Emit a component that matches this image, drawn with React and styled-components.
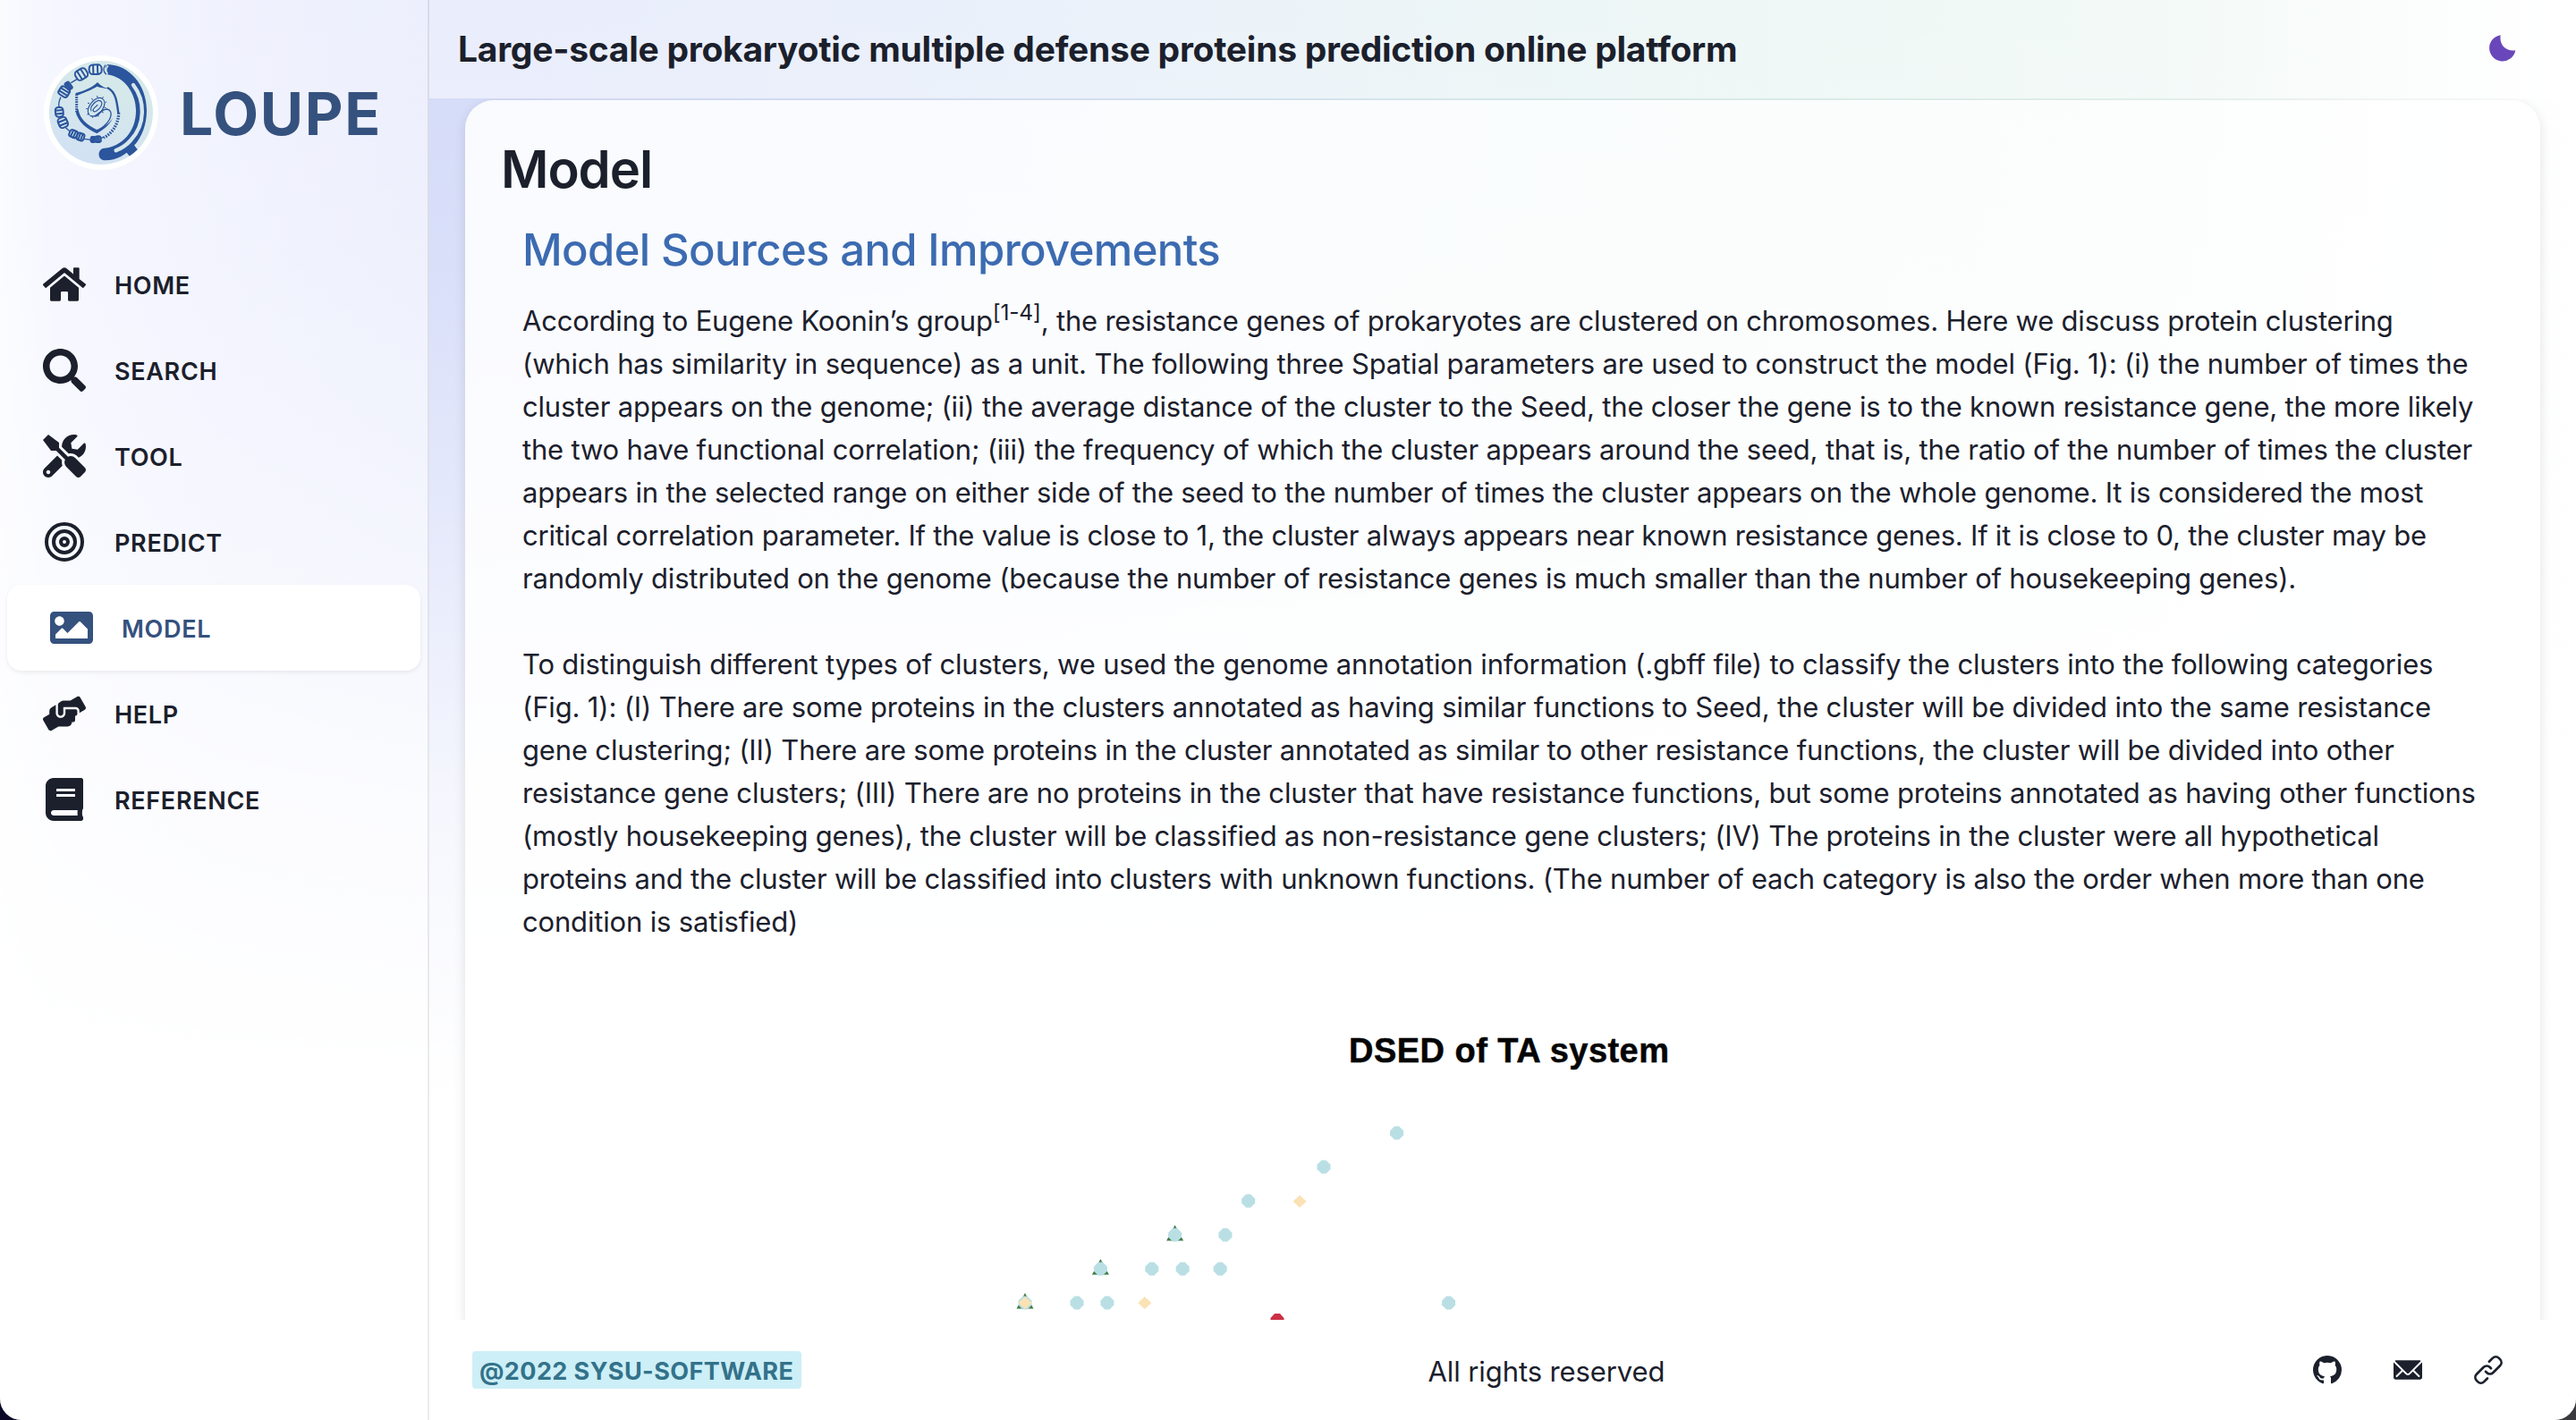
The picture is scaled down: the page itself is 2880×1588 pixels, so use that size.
import React from "react";
import styled, { createGlobalStyle } from "styled-components";
import { FaHome, FaSearch, FaTools, FaImage, FaHandsHelping, FaBook } from "react-icons/fa";
import { FiTarget } from "react-icons/fi";
import { BsGithub } from "react-icons/bs";

const ink = "#1b202c";
const navy = "#35517e";
const logoBlue = "#2b559c";

const Global = createGlobalStyle`
  * { box-sizing: border-box; }
  html { background: linear-gradient(90deg, #0b0728, #3a3a3e); }
  body { margin: 0; font-family: Inter, "Liberation Sans", sans-serif; color: ${ink}; }
  h1, h2, h3, p { margin: 0; font-weight: inherit; }
  svg { display: block; flex: none; }
`;

const Shell = styled.div`
  display: flex;
  width: 2880px;
  height: 1588px;
  overflow: hidden;
  border-radius: 0 0 24px 24px;
  background:
    linear-gradient(180deg, rgba(255,255,255,0) 0, rgba(255,255,255,.12) 300px, rgba(255,255,255,.42) 600px, rgba(255,255,255,.78) 900px, #fff 1230px),
    linear-gradient(90deg, #f4f6ff 0, #e9ecff 60px, #dde1fc 250px, #d4dbf9 480px, #d5e0f6 1000px, #d7e7f2 1430px, #dcefeb 1900px, #e5f3ef 2400px, #f8fbfa 2700px, #fff 2880px);
`;

const Sidebar = styled.aside`
  width: 480px;
  flex: none;
  border-right: 2px solid rgba(0, 0, 0, 0.08);
  background: rgba(255, 255, 255, 0.56);
`;

const Brand = styled.div`
  display: flex;
  align-items: center;
  gap: 24px;
  height: 270px;
  padding: 0 0 18px 49px;
`;

const BrandName = styled.h1`
  padding-top: 2px;
  font-size: 66px;
  font-weight: 700;
  letter-spacing: 1.7px;
  color: ${navy};
`;

const Nav = styled.nav`
  display: flex;
  flex-direction: column;
`;

const NavItem = styled.a`
  display: flex;
  align-items: center;
  gap: 32px;
  height: 96px;
  padding-left: 48px;
  color: ${(p) => (p.$active ? navy : ink)};
  ${(p) =>
    p.$active &&
    `margin: 0 8px; background: #fff; border-radius: 16px; box-shadow: 0 2px 5px rgba(0,0,0,.07);`}
`;

const NavLabel = styled.span`
  padding-top: 2px;
  font-size: 27px;
  font-weight: 600;
  letter-spacing: 0.68px;
`;

const Column = styled.div`
  display: flex;
  flex-direction: column;
  width: 2400px;
`;

const Header = styled.header`
  display: flex;
  align-items: center;
  justify-content: space-between;
  flex: none;
  height: 110px;
  padding: 0 67px 2px 32px;
  background: rgba(255, 255, 255, 0.5);
`;

const Title = styled.h2`
  font-size: 39px;
  font-weight: 700;
  letter-spacing: -0.262px;
`;

const Viewport = styled.main`
  flex: 1;
  min-height: 0;
  overflow: hidden;
  padding: 2px 40px 0;
`;

const Card = styled.section`
  width: 2320px;
  height: 1500px;
  padding-top: 41px;
  border-radius: 32px;
  background: rgba(255, 255, 255, 0.86);
  box-shadow: 0 4px 14px rgba(0, 0, 0, 0.11);
`;

const PageTitle = styled.h2`
  height: 72px;
  padding-left: 40px;
  line-height: 72px;
  font-size: 58px;
  font-weight: 600;
  letter-spacing: -1.1px;
`;

const SectionTitle = styled.h3`
  height: 60px;
  margin: 25px 0;
  padding-left: 64px;
  line-height: 60px;
  font-size: 49px;
  font-weight: 500;
  letter-spacing: -0.63px;
  color: #3c6bb1;
`;

const Paragraph = styled.p`
  padding-left: 64px;
  margin-bottom: ${(p) => p.$gap || 0}px;
  font-size: 31px;
  line-height: 48px;
`;

const Line = styled.span`
  display: block;
  width: max-content;
  white-space: nowrap;
  letter-spacing: ${(p) => p.$track}px;
`;

const Sup = styled.sup`
  font-size: 24.5px;
  line-height: 0;
  vertical-align: 12px;
`;

const Footer = styled.footer`
  display: flex;
  align-items: center;
  justify-content: space-between;
  flex: none;
  height: 112px;
  padding: 0 82px 0 48px;
  background: rgba(255, 255, 255, 0.6);
`;

const Badge = styled.span`
  display: flex;
  align-items: center;
  width: 368px;
  height: 42px;
  padding: 2px 8px 0;
  border-radius: 4px;
  background: #cdeff7;
  color: #33728a;
  font-size: 27px;
  font-weight: 700;
  letter-spacing: 0.42px;
`;

const Rights = styled.span`
  padding-top: 2px;
  font-size: 31px;
  letter-spacing: -0.1px;
`;

const Links = styled.div`
  display: flex;
  gap: 58px;
  padding-left: 24px;
`;

const MoonIcon = () => (
  <svg width="30" height="30" viewBox="0 0 30 30" fill="#6947bb">
    <path d="M12.7.2A14.7 14.7 0 1 0 29.3 17.2C20 19 10.600 12 12.700.2Z" />
  </svg>
);

const MailIcon = () => (
  <svg width="32" height="32" viewBox="0 0 24 24" fill={ink}>
    <path d="M11.114,14.556a1.252,1.252,0,0,0,1.768,0L22.568,4.87a.5.5,0,0,0-.281-.849A1.966,1.966,0,0,0,22,4H2a1.966,1.966,0,0,0-.289.021.5.5,0,0,0-.281.849Z" />
    <path d="M23.888,5.832a.182.182,0,0,0-.2.039l-6.2,6.2a.251.251,0,0,0,0,.354l4.343,4.342a.75.75,0,1,1-1.061,1.061l-4.342-4.343a.25.25,0,0,0-.354,0l-2.129,2.129a2.75,2.75,0,0,1-3.888,0L7.926,13.488a.251.251,0,0,0-.354,0L3.23,17.831a.75.75,0,0,1-1.061-1.061l4.342-4.342a.251.251,0,0,0,0-.354l-6.2-6.2a.182.182,0,0,0-.2-.039A.182.182,0,0,0,0,6V18a2,2,0,0,0,2,2H22a2,2,0,0,0,2-2V6A.181.181,0,0,0,23.888,5.832Z" />
  </svg>
);

const LinkIcon = () => (
  <svg width="32" height="32" viewBox="0 0 24 24" fill={ink}>
    <path d="M10.458,18.374,7.721,21.11a2.853,2.853,0,0,1-3.942,0l-.892-.891a2.787,2.787,0,0,1,0-3.941l5.8-5.8a2.789,2.789,0,0,1,3.942,0l.893.892A1,1,0,0,0,14.94,9.952l-.893-.892a4.791,4.791,0,0,0-6.771,0l-5.8,5.8a4.787,4.787,0,0,0,0,6.77l.892.891a4.785,4.785,0,0,0,6.771,0l2.736-2.735a1,1,0,1,0-1.414-1.415Z" />
    <path d="M22.526,2.363l-.892-.892a4.8,4.8,0,0,0-6.77,0l-2.905,2.9a1,1,0,0,0,1.414,1.414l2.9-2.9a2.79,2.79,0,0,1,3.941,0l.893.893a2.786,2.786,0,0,1,0,3.942l-5.8,5.8a2.769,2.769,0,0,1-3.942,0l-.892-.892a1,1,0,0,0-1.414,1.414l.892.892a4.785,4.785,0,0,0,6.771,0l5.8-5.8a4.786,4.786,0,0,0,0-6.771Z" />
  </svg>
);

/* One turn of the DNA helix: an oval with rungs. */
const Helix = ({ x, y, rx, ry, turn }) => (
  <g transform={`translate(${x} ${y}) rotate(${turn})`}>
    <rect x={-rx} y={-ry} width={rx * 2} height={ry * 2} rx={rx * 0.6} />
    <path d={`M${-rx * 0.35} ${-ry}V${ry}M${rx * 0.35} ${-ry}V${ry}`} />
  </g>
);

const turns = [
  [200, 67, 21, 16, -2], [153, 83, 20, 17, -32], [95, 142, 15, 17, -58], [110, 122, 8, 13, -35],
  [79, 210, 16, 13, 85], [91, 245, 17, 15, 68], [126, 283, 13, 12, 25], [150, 293, 12, 12, 20],
  [192, 302, 7, 9, 5], [209, 301, 9, 10, -5],
];

const Logo = () => (
  <svg width="128" height="128" viewBox="27 20 384 384">
    <defs>
      <linearGradient id="disc" x1="0.7" y1="0" x2="0.3" y2="1">
        <stop offset="0.3" stopColor="#d5e8ea" />
        <stop offset="1" stopColor="#d2e1f4" />
      </linearGradient>
      <clipPath id="discClip"><circle cx="219" cy="212" r="174" /></clipPath>
    </defs>
    <circle cx="219" cy="212" r="192" fill="#fff" />
    <circle cx="219" cy="212" r="174" fill="url(#disc)" />
    <g clipPath="url(#discClip)" fill="none" stroke={logoBlue} strokeLinejoin="round">
      <path fill={logoBlue} stroke="none" d="M240 50C315 52 372 120 372 205C372 300 305 370 235 372C207 374 205 338 225 332C290 326 336 275 336 205C336 150 300 92 240 84C232 72 232 60 240 50Z" />
      <path d="M327 119C366 170 370 250 318 305C304 321 286 332 269 339" stroke="#d5e7ec" strokeWidth="13" strokeLinecap="round" />
      <path fill={logoBlue} stroke="none" d="M303 344L330 320L345 340L318 362Z" />
      <path d="M334 318L343 330M348 304L358 318" stroke="#d5e7ec" strokeWidth="9" />
      <path d="M243 54C234 62 234 74 241 82" stroke="#d5e7ec" strokeWidth="5" />
      <path d="M234 52C226 62 226 74 236 84" strokeWidth="4" />
      <path d="M138 100L118 112M84 160C78 172 76 184 78 194M100 262L116 276M162 300L186 303M218 298L228 294" strokeWidth="4" />
      <g strokeWidth="6">
        {turns.map(([x, y, rx, ry, turn]) => (
          <Helix key={`${x}-${y}`} x={x} y={y} rx={rx} ry={ry} turn={turn} />
        ))}
      </g>
      <path fill={logoBlue} stroke="none" d="M133 146C160 140 188 128 207 110C220 124 232 128 246 132C230 130 216 128 206 124C190 134 160 146 138 154Z" />
      <path d="M240 128C268 142 272 172 277 214" strokeWidth="7" />
      <path d="M137 150V210" strokeWidth="9" strokeDasharray="5 3" />
      <path d="M140 200V222" strokeWidth="5" />
      <path fill={logoBlue} stroke="none" d="M133 206C142 246 172 266 205 282C232 266 250 250 258 230C246 250 226 262 204 269C174 254 150 236 143 204Z" />
      <path d="M278 212C278 250 256 282 228 296" strokeWidth="10" strokeDasharray="5 4" />
      <g transform="rotate(38 203 192)" strokeWidth="3.5">
        <path d="M203 228C174 226 176 158 203 158C230 158 230 212 218 222" />
        <path d="M199 214C184 208 188 168 203 168C216 168 217 190 212 204C208 214 199 210 200 200L203 184" />
        <ellipse cx="203" cy="192" rx="28" ry="38" strokeWidth="6" strokeDasharray="3 16" />
      </g>
      <path d="M182 222C204 232 214 202 238 200C262 204 258 238 214 268" strokeWidth="4" />
    </g>
  </svg>
);

const dots = [
  [1561.6, 1267], [1480, 1305], [1395.7, 1343], [1369.9, 1381], [1313.6, 1381], [1230.4, 1419],
  [1287.8, 1419], [1322.2, 1419], [1364.2, 1419], [1146, 1457], [1204, 1457], [1237.9, 1457], [1619.6, 1457],
];
const diamonds = [[1453.1, 1343.5], [1279.8, 1457], [1146, 1457]];
const triangles = [[1313.6, 1381], [1230.4, 1419], [1146, 1457]];

const Scatter = () => (
  <svg width="2320" height="500" viewBox="520 1055 2320 500">
    <text x="1508" y="1187.700" fontFamily="Liberation Sans, Arial, sans-serif" fontWeight="700" fontSize="38" textLength="358" fill="#050505" stroke="#050505" strokeWidth="0.5">
      DSED of TA system
    </text>
    {triangles.map(([x, y]) => (
      <path key={x} fill="#3f7d45" d={`M${x} ${y - 11}L${x + 9.5} ${y + 6.5}H${x - 9.5}Z`} />
    ))}
    {dots.map(([x, y]) => (
      <path key={`${x}${y}`} fill="#b9dfe4" d={`M${x - 2.5} ${y - 7.5}h5l5 5v5l-5 5h-5l-5 -5v-5z`} />
    ))}
    {diamonds.map(([x, y]) => (
      <path key={x} fill="#fbe2b5" d={`M${x} ${y - 7}L${x + 7.5} ${y}L${x} ${y + 7}L${x - 7.5} ${y}Z`} />
    ))}
    <path fill="#cb3145" d="M1425 1469h6l4.500 5v8h-15v-8z" />
  </svg>
);

const nav = [
  ["HOME", FaHome], ["SEARCH", FaSearch], ["TOOL", FaTools], ["PREDICT", FiTarget],
  ["MODEL", FaImage], ["HELP", FaHandsHelping], ["REFERENCE", FaBook],
];

/* Each line carries its own tracking. */
const first = [
  [<>According to Eugene Koonin’s group<Sup>[1-4]</Sup>, the resistance genes of prokaryotes are clustered on chromosomes. Here we discuss protein clustering</>, -0.2],
  ["(which has similarity in sequence) as a unit. The following three Spatial parameters are used to construct the model (Fig. 1): (i) the number of times the", -0.16],
  ["cluster appears on the genome; (ii) the average distance of the cluster to the Seed, the closer the gene is to the known resistance gene, the more likely", -0.188],
  ["the two have functional correlation; (iii) the frequency of which the cluster appears around the seed, that is, the ratio of the number of times the cluster", -0.175],
  ["appears in the selected range on either side of the seed to the number of times the cluster appears on the whole genome. It is considered the most", -0.187],
  ["critical correlation parameter. If the value is close to 1, the cluster always appears near known resistance genes. If it is close to 0, the cluster may be", -0.23],
  ["randomly distributed on the genome (because the number of resistance genes is much smaller than the number of housekeeping genes).", -0.205],
];

const second = [
  ["To distinguish different types of clusters, we used the genome annotation information (.gbff file) to classify the clusters into the following categories", -0.188],
  ["(Fig. 1): (I) There are some proteins in the clusters annotated as having similar functions to Seed, the cluster will be divided into the same resistance", -0.162],
  ["gene clustering; (II) There are some proteins in the cluster annotated as similar to other resistance functions, the cluster will be divided into other", -0.17],
  ["resistance gene clusters; (III) There are no proteins in the cluster that have resistance functions, but some proteins annotated as having other functions", -0.176],
  ["(mostly housekeeping genes), the cluster will be classified as non-resistance gene clusters; (IV) The proteins in the cluster were all hypothetical", -0.206],
  ["proteins and the cluster will be classified into clusters with unknown functions. (The number of each category is also the order when more than one", -0.221],
  ["condition is satisfied)", -0.17],
];

const Text = ({ lines, gap }) => (
  <Paragraph $gap={gap}>
    {lines.map(([text, track], i) => (
      <Line key={i} $track={track}>{text}</Line>
    ))}
  </Paragraph>
);

export default function App() {
  return (
    <>
      <Global />
      <Shell>
        <Sidebar>
          <Brand>
            <Logo />
            <BrandName>LOUPE</BrandName>
          </Brand>
          <Nav>
            {nav.map(([label, Icon]) => (
              <NavItem key={label} $active={label === "MODEL"}>
                <Icon size={48} />
                <NavLabel>{label}</NavLabel>
              </NavItem>
            ))}
          </Nav>
        </Sidebar>
        <Column>
          <Header>
            <Title>Large-scale prokaryotic multiple defense proteins prediction online platform</Title>
            <MoonIcon />
          </Header>
          <Viewport>
            <Card>
              <PageTitle>Model</PageTitle>
              <SectionTitle>Model Sources and Improvements</SectionTitle>
              <Text lines={first} gap={48} />
              <Text lines={second} />
              <Scatter />
            </Card>
          </Viewport>
          <Footer>
            <Badge>@2022 SYSU-SOFTWARE</Badge>
            <Rights>All rights reserved</Rights>
            <Links>
              <BsGithub size={32} color={ink} />
              <MailIcon />
              <LinkIcon />
            </Links>
          </Footer>
        </Column>
      </Shell>
    </>
  );
}
